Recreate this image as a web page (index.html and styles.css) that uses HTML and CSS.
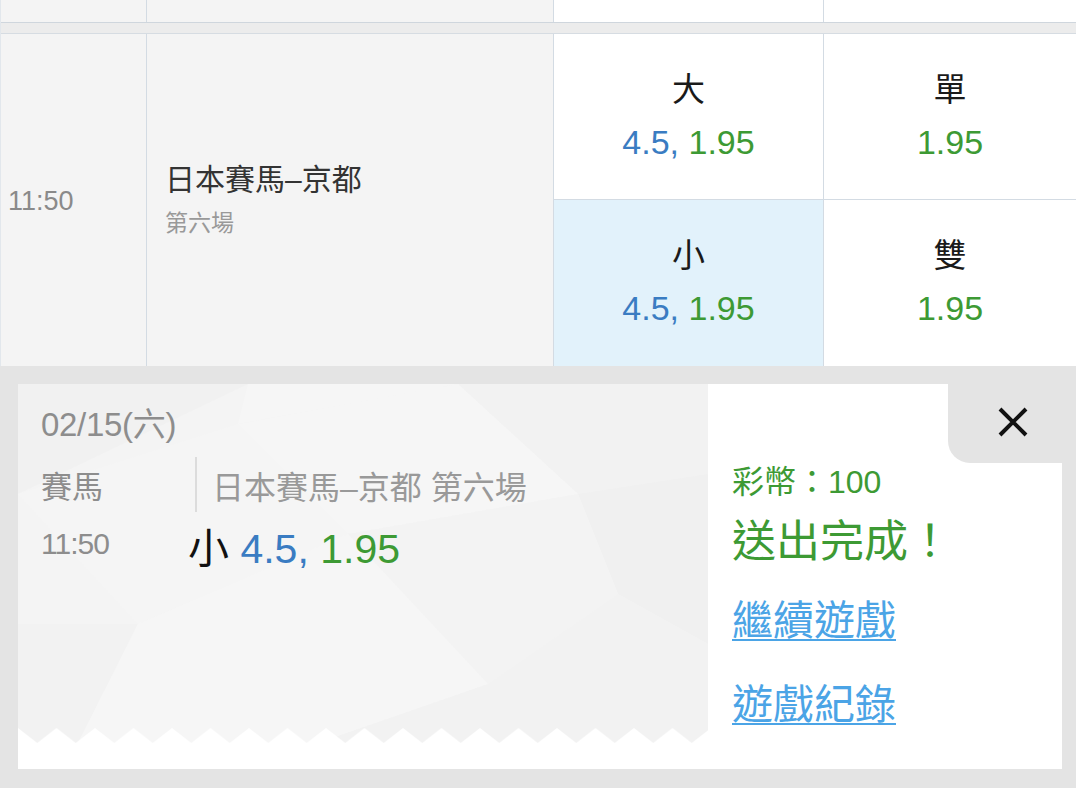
FILE: index.html
```html
<!DOCTYPE html>
<html lang="zh-Hant">
<head>
<meta charset="utf-8">
<title>賽馬</title>
<link rel="stylesheet" href="styles.css">
</head>
<body>
<div class="page">
  <div class="board">
    <div class="row-prev">
      <div class="pc gray"></div>
      <div class="pc gray"></div>
      <div class="pc"></div>
      <div class="pc last"></div>
    </div>
    <div class="sep"></div>
    <div class="race">
      <div class="c-time">11:50</div>
      <div class="c-event">
        <div class="ev-title">日本賽馬–京都</div>
        <div class="ev-sub">第六場</div>
      </div>
      <div class="opt">
        <div class="lbl">大</div>
        <div class="num"><span class="blue">4.5,</span> <span class="green">1.95</span></div>
      </div>
      <div class="opt last">
        <div class="lbl">單</div>
        <div class="num"><span class="green">1.95</span></div>
      </div>
      <div class="opt sel bottom">
        <div class="lbl">小</div>
        <div class="num"><span class="blue">4.5,</span> <span class="green">1.95</span></div>
      </div>
      <div class="opt last bottom">
        <div class="lbl">雙</div>
        <div class="num"><span class="green">1.95</span></div>
      </div>
    </div>
  </div>

  <div class="overlay">
    <div class="card">
      <div class="ticket">
        <svg class="ticket-bg" width="690" height="385" viewBox="0 0 690 385" aria-hidden="true">
          <defs>
            <pattern id="zz" x="0" y="344" width="38.5" height="15" patternUnits="userSpaceOnUse">
              <polygon points="0,0 19.25,15 0,15" fill="#ffffff"/>
              <polygon points="38.5,0 38.5,15 19.25,15" fill="#ffffff"/>
            </pattern>
          </defs>
          <rect x="0" y="0" width="690" height="359" fill="#f4f4f4"/>
          <polygon points="0,0 230,0 0,110" fill="#f1f1f1"/>
          <polygon points="230,0 440,0 220,40" fill="#f6f6f6"/>
          <polygon points="440,0 690,0 690,90 560,110" fill="#f2f2f2"/>
          <polygon points="220,40 440,0 560,110 330,150" fill="#f6f6f6"/>
          <polygon points="0,110 220,40 330,150 120,240" fill="#f5f5f5"/>
          <polygon points="560,110 690,90 690,260 600,210" fill="#f0f0f0"/>
          <polygon points="330,150 560,110 600,210 470,300" fill="#f3f3f3"/>
          <polygon points="0,240 120,240 60,359 0,359" fill="#f2f2f2"/>
          <polygon points="120,240 330,150 470,300 300,359 60,359" fill="#f6f6f6"/>
          <polygon points="470,300 600,210 690,260 690,359 300,359" fill="#f2f2f2"/>
          <rect x="0" y="344" width="690" height="15" fill="url(#zz)"/>
          <rect x="0" y="359" width="690" height="26" fill="#ffffff"/>
        </svg>
        <div class="t-date">02/15(六)</div>
        <div class="t-row">
          <div class="t-sport">賽馬</div>
          <div class="t-venue">日本賽馬–京都 第六場</div>
        </div>
        <div class="t-row2">
          <div class="t-time">11:50</div>
          <div class="t-bet">小 <span class="blue">4.5,</span> <span class="green">1.95</span></div>
        </div>
      </div>
      <div class="result">
        <div class="r-coins">彩幣：100</div>
        <div class="r-done">送出完成！</div>
        <a class="r-link first" href="#">繼續遊戲</a>
        <a class="r-link" href="#">遊戲紀錄</a>
      </div>
      <button class="close" type="button" aria-label="關閉">
        <svg width="30" height="30" viewBox="0 0 30 30" aria-hidden="true">
          <path d="M2 2 L28 28 M28 2 L2 28" stroke="#111" stroke-width="4" fill="none"/>
        </svg>
      </button>
    </div>
  </div>
</div>
</body>
</html>
```

FILE: styles.css
```css
* { box-sizing: border-box; }

html, body {
  margin: 0;
  padding: 0;
  background: #ffffff;
}

body {
  font-family: "Liberation Sans", "Noto Sans CJK TC", sans-serif;
  color: #222;
}

.page {
  width: 1076px;
  height: 788px;
  display: flex;
  flex-direction: column;
  overflow: hidden;
}

.board {
  border-left: 1px solid #e2e7ec;
}

.row-prev {
  display: grid;
  grid-template-columns: 146px 407px 270px 252px;
  height: 22px;
}

.pc {
  border-right: 1px solid #d3dbe3;
  background: #ffffff;
}
.pc.gray { background: #f4f4f4; }
.pc.last { border-right: none; }

.sep {
  height: 12px;
  background: #ececec;
  border-top: 1px solid #cfd6dd;
  border-bottom: 1px solid #d6dce2;
}

.race {
  display: grid;
  grid-template-columns: 146px 407px 270px 252px;
  grid-template-rows: 166px 166px;
}

.c-time {
  grid-row: 1 / span 2;
  background: #f4f4f4;
  border-right: 1px solid #d3dbe3;
  display: flex;
  align-items: center;
  padding-left: 7px;
  padding-top: 2px;
  font-size: 27px;
  color: #8a8a8a;
}

.c-event {
  grid-row: 1 / span 2;
  background: #f4f4f4;
  border-right: 1px solid #d3dbe3;
  display: flex;
  flex-direction: column;
  justify-content: center;
  padding-left: 18px;
}

.ev-title {
  font-size: 30px;
  line-height: 40px;
  color: #333;
}

.ev-sub {
  margin-top: 6px;
  font-size: 23px;
  line-height: 34px;
  color: #999;
}

.opt {
  background: #ffffff;
  border-right: 1px solid #d3dbe3;
  border-bottom: 1px solid #d3dbe3;
  display: flex;
  flex-direction: column;
  align-items: center;
  justify-content: center;
}
.opt.last { border-right: none; }
.opt.bottom { border-bottom: none; }
.opt.sel { background: #e2f2fb; }

.lbl {
  font-size: 33px;
  line-height: 50px;
  color: #1a1a1a;
}

.num {
  font-size: 34px;
  line-height: 54px;
}

.blue { color: #3a7cc2; }
.green { color: #3d9a34; }

.overlay {
  flex: 1;
  background: #e4e4e4;
  padding: 18px 14px 19px 18px;
}

.card {
  position: relative;
  height: 385px;
  background: #ffffff;
  display: flex;
}

.ticket {
  position: relative;
  flex: none;
  width: 690px;
  height: 385px;
  padding: 21px 0 0 23px;
}

.ticket-bg {
  position: absolute;
  left: 0;
  top: 0;
}

.t-date, .t-row, .t-row2 { position: relative; }

.t-date {
  font-size: 33px;
  line-height: 40px;
  color: #8d8d8d;
  letter-spacing: -0.3px;
}

.t-row {
  margin-top: 12px;
  display: flex;
  align-items: center;
  height: 55px;
}

.t-sport {
  width: 154px;
  font-size: 31px;
  color: #8d8d8d;
}

.t-venue {
  height: 55px;
  display: flex;
  align-items: center;
  border-left: 2px solid #dcdcdc;
  padding-left: 15px;
  font-size: 32px;
  color: #999;
}

.t-row2 {
  margin-top: 14px;
  display: flex;
  align-items: flex-start;
}

.t-time {
  width: 147px;
  font-size: 30px;
  line-height: 36px;
  letter-spacing: -1px;
  color: #8d8d8d;
}

.t-bet {
  margin-top: 0;
  font-size: 41px;
  line-height: 46px;
  color: #111;
}

.result {
  flex: 1;
  display: flex;
  flex-direction: column;
  align-items: flex-start;
  padding: 78px 0 0 24px;
}

.r-coins {
  font-size: 32px;
  line-height: 40px;
  color: #3d9a34;
}

.r-done {
  margin-top: 12px;
  font-size: 44px;
  line-height: 56px;
  color: #3d9a34;
}

.r-link {
  font-size: 41px;
  line-height: 50px;
  color: #4ba4e6;
  text-decoration: underline;
  text-decoration-thickness: 2px;
  text-underline-offset: 4px;
}
.r-link.first { margin-top: 26px; }
.r-link + .r-link { margin-top: 34px; }

.close {
  position: absolute;
  top: 0;
  right: 0;
  width: 114px;
  height: 79px;
  border: none;
  padding: 0 0 4px 16px;
  background: #e4e4e4;
  border-bottom-left-radius: 22px;
  display: flex;
  align-items: center;
  justify-content: center;
  cursor: pointer;
}
```
